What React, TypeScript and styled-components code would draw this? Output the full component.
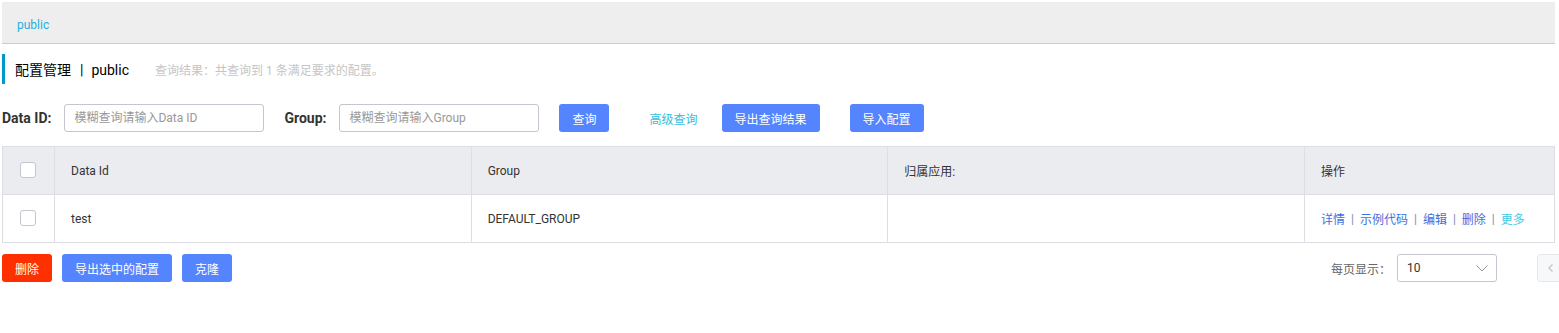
import React from 'react'
import styled, { createGlobalStyle } from 'styled-components'

const rows = [{ dataId: 'test', group: 'DEFAULT_GROUP', app: '' }]

const ops = ['详情', '示例代码', '编辑', '删除']

const Chevron = ({ dir }: { dir: 'left' | 'right' }) => (
  <svg width="10" height="10" viewBox="0 0 10 10">
    <polyline
      points={dir === 'left' ? '6.5,1.5 3,5 6.5,8.5' : '3.5,1.5 7,5 3.5,8.5'}
      fill="none"
      stroke="#c4c6cf"
      strokeWidth="1.4"
    />
  </svg>
)

export default function App() {
  return (
    <Page>
      <Global />
      <TopBar>
        <Crumb>public</Crumb>
      </TopBar>
      <TitleRow>
        <Title>
          配置管理<TitleSep>|</TitleSep>public
        </Title>
        <Summary>查询结果：共查询到 1 条满足要求的配置。</Summary>
      </TitleRow>
      <SearchRow>
        <Label>Data ID:</Label>
        <Input placeholder="模糊查询请输入Data ID" />
        <Label>Group:</Label>
        <Input placeholder="模糊查询请输入Group" />
        <Button>查询</Button>
        <TextLink>高级查询</TextLink>
        <Button>导出查询结果</Button>
        <Button $gap={30}>导入配置</Button>
      </SearchRow>
      <Table>
        <HeadRow>
          <CheckCell>
            <Checkbox />
          </CheckCell>
          <Cell>Data Id</Cell>
          <Cell>Group</Cell>
          <Cell>归属应用:</Cell>
          <Cell>操作</Cell>
        </HeadRow>
        {rows.map((r) => (
          <BodyRow key={r.dataId}>
            <CheckCell>
              <Checkbox />
            </CheckCell>
            <Cell>{r.dataId}</Cell>
            <Cell>{r.group}</Cell>
            <Cell>{r.app}</Cell>
            <Cell>
              {ops.map((o) => (
                <React.Fragment key={o}>
                  <OpLink>{o}</OpLink>
                  <Sep>|</Sep>
                </React.Fragment>
              ))}
              <MoreLink>更多</MoreLink>
            </Cell>
          </BodyRow>
        ))}
      </Table>
      <Footer>
        <Actions>
          <Button $danger>删除</Button>
          <Button>导出选中的配置</Button>
          <Button>克隆</Button>
        </Actions>
        <PageSize>
          <PageLabel>每页显示：</PageLabel>
          <Select>
            <span>10</span>
            <svg width="14" height="14" viewBox="0 0 14 14">
              <polyline points="1.5,4.5 7,10 12.5,4.5" fill="none" stroke="#999" strokeWidth="1" />
            </svg>
          </Select>
          <Pager>
            <PagerButton disabled aria-label="上一页">
              <Chevron dir="left" />
            </PagerButton>
            <PagerButton disabled aria-label="下一页">
              <Chevron dir="right" />
            </PagerButton>
          </Pager>
        </PageSize>
      </Footer>
    </Page>
  )
}

const Global = createGlobalStyle`
  * {
    box-sizing: border-box;
  }

  html, body {
    margin: 0;
    padding: 0;
    overflow: hidden;
    background: #fff;
    font-family: Roboto, 'Noto Sans CJK SC', sans-serif;
    font-size: 12px;
    color: #333;
  }
`

const Page = styled.div`
  padding: 2px 4px 0 2px;
  overflow: hidden;
`

const TopBar = styled.div`
  height: 42px;
  background: #eeeeee;
  border-bottom: 1px solid #cccccc;
  display: flex;
  align-items: center;
  padding: 4px 0 0 15px;
`

const Crumb = styled.span`
  color: #1fb1dd;
  font-size: 12px;
`

const TitleRow = styled.div`
  margin-top: 10px;
  height: 30px;
  border-left: 3px solid #0099cc;
  display: flex;
  align-items: center;
  padding-left: 10px;
`

const Title = styled.span`
  font-size: 14px;
  color: #000;
`

const TitleSep = styled.span`
  margin: 0 8px 0 9px;
`

const Summary = styled.span`
  margin-left: 26px;
  color: #c5c5c5;
  font-size: 12px;
`

const SearchRow = styled.div`
  margin-top: 20px;
  display: flex;
  align-items: center;
  height: 28px;
`

const Label = styled.label`
  font-weight: bold;
  font-size: 14px;
  color: #333;
  margin-right: 13px;

  & + input + & {
    margin-left: 20px;
  }
`

const Input = styled.input`
  width: 200px;
  height: 28px;
  border: 1px solid #c4c6cf;
  border-radius: 3px;
  padding: 0 9px;
  font-family: inherit;
  font-size: 12px;
  outline: none;

  &::placeholder {
    color: #999;
  }
`

const Button = styled.button<{ $danger?: boolean; $gap?: number }>`
  height: 28px;
  padding: 0 13px;
  border: none;
  border-radius: 3px;
  background: ${(p) => (p.$danger ? '#ff3000' : '#5584ff')};
  color: #fff;
  font-family: inherit;
  font-size: 12px;
  margin-left: ${(p) => p.$gap ?? 20}px;
  cursor: pointer;
`

const TextLink = styled.a`
  color: #33bde0;
  font-size: 12px;
  margin-left: 40px;
  margin-right: 4px;
`

const Table = styled.div`
  margin-top: 14px;
  border: 1px solid #dcdee3;
  border-bottom: none;
`

const HeadRow = styled.div`
  display: grid;
  grid-template-columns: 51px 1fr 1fr 1fr 250px;
  height: 48px;
  background: #ebecf0;
  border-bottom: 1px solid #dcdee3;
`

const BodyRow = styled(HeadRow)`
  background: #fff;
`

const Cell = styled.div`
  display: flex;
  align-items: center;
  padding-left: 16px;
  border-left: 1px solid #dcdee3;
  color: #333;
  white-space: nowrap;
`

const CheckCell = styled.div`
  display: flex;
  align-items: center;
  justify-content: center;
  padding-right: 2px;
`

const Checkbox = styled.span`
  width: 16px;
  height: 16px;
  border: 1px solid #c4c6cf;
  border-radius: 3px;
  background: #fff;
  margin-top: -2px;
`

const OpLink = styled.a`
  color: #3b6fe0;
`

const MoreLink = styled.a`
  color: #3fcbe4;
`

const Sep = styled.span`
  color: #7b8db0;
  margin: 0 6px;
`

const Footer = styled.div`
  margin-top: 11px;
  display: flex;
  align-items: center;
  justify-content: space-between;
`

const Actions = styled.div`
  display: flex;
  margin-left: -20px;

  & > button + button {
    margin-left: 10px;
  }
`

const PageSize = styled.div`
  display: flex;
  align-items: center;
`

const PageLabel = styled.span`
  color: #666;
  margin-right: 6px;
`

const Select = styled.div`
  width: 100px;
  height: 28px;
  border: 1px solid #c4c6cf;
  border-radius: 3px;
  display: flex;
  align-items: center;
  justify-content: space-between;
  padding: 0 7px 0 9px;
  color: #333;
`

const Pager = styled.div`
  display: flex;
  gap: 4px;
  margin-left: 40px;
  margin-right: -42px;
`

const PagerButton = styled.button`
  width: 28px;
  height: 28px;
  border: 1px solid #e6e7eb;
  border-radius: 3px;
  background: ${(p) => (p.disabled ? '#f7f8fa' : '#fff')};
  display: flex;
  align-items: center;
  justify-content: center;
  padding: 0;
`
